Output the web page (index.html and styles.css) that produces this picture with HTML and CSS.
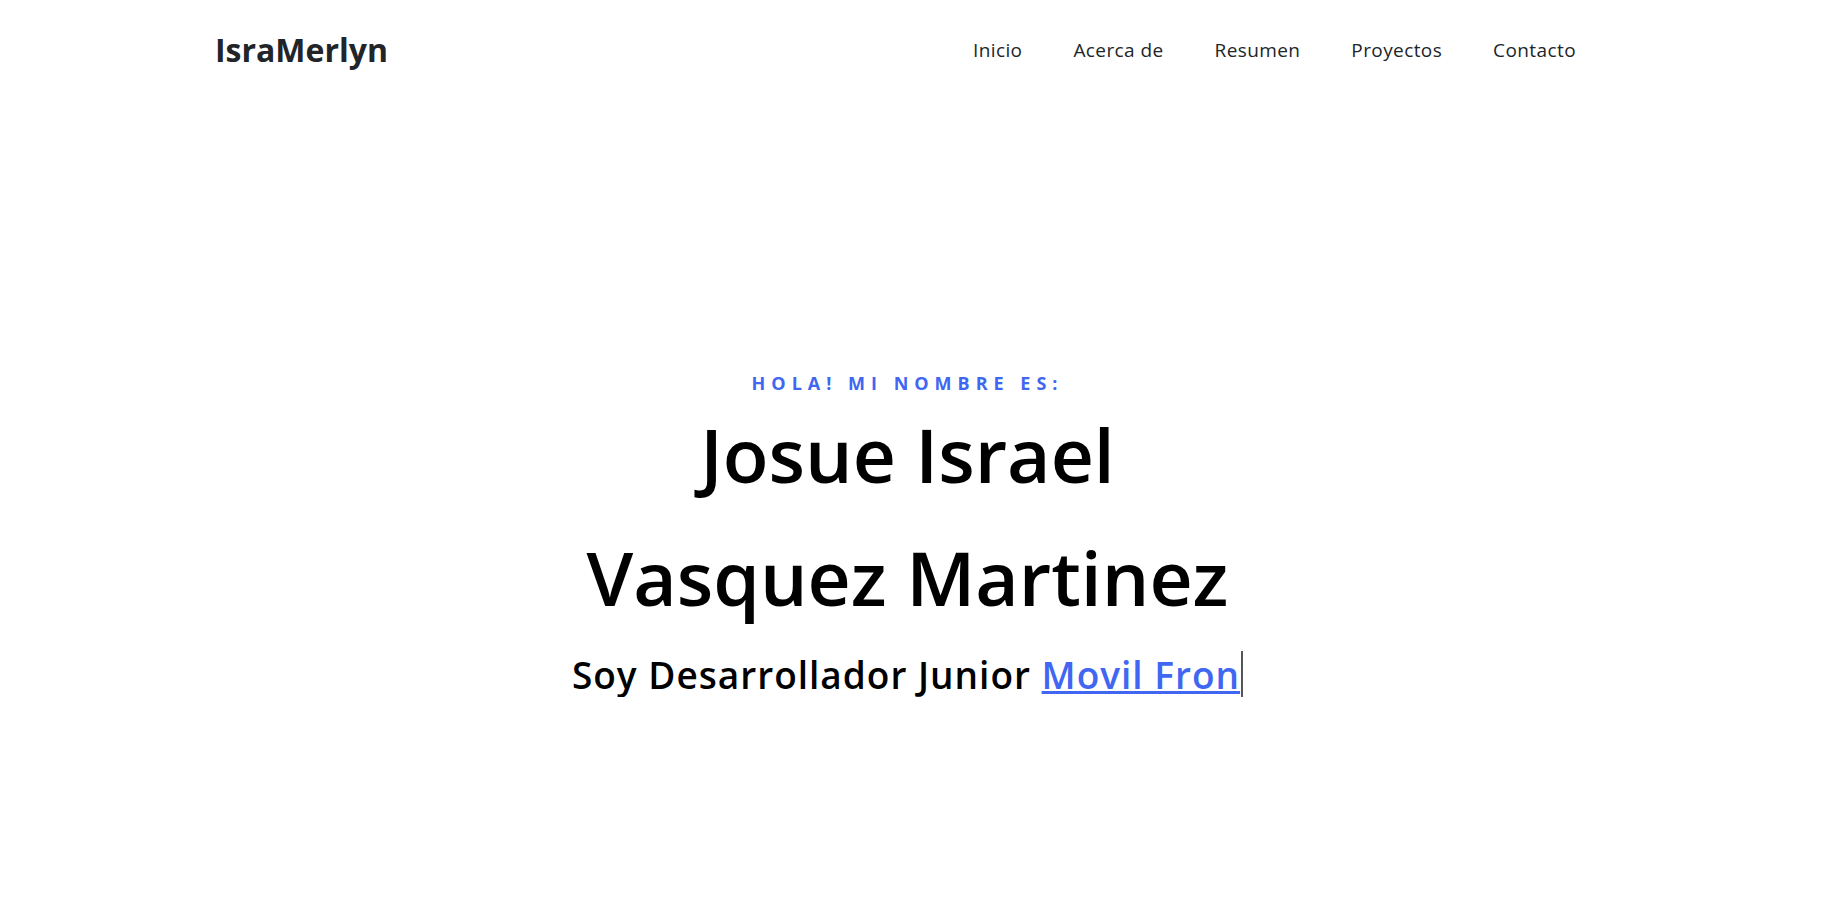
FILE: index.html
```html
<!DOCTYPE html>
<html lang="es">
<head>
<meta charset="utf-8">
<title>IsraMerlyn</title>
<link rel="stylesheet" href="styles.css">
</head>
<body>
<header class="header">
  <div class="header-inner">
    <a class="logo" href="#">IsraMerlyn</a>
    <nav class="nav">
      <a href="#">Inicio</a>
      <a href="#">Acerca de</a>
      <a href="#">Resumen</a>
      <a href="#">Proyectos</a>
      <a href="#">Contacto</a>
    </nav>
  </div>
</header>
<section class="hero">
  <p class="hero-label">Hola! Mi nombre es:</p>
  <h1 class="hero-title"><span class="hero-line">Josue Israel</span><span class="hero-line">Vasquez Martinez</span></h1>
  <p class="hero-sub">Soy Desarrollador Junior <a class="typed" href="#">Movil Fron</a><span class="caret"></span></p>
</section>
</body>
</html>
```
FILE: styles.css
```css
* { box-sizing: border-box; }
html, body { margin: 0; padding: 0; background: #fff; }
body { font-family: "Open Sans", "Liberation Sans", sans-serif; color: #212529; }

.header { height: 100px; }
.header-inner {
  width: 1411px;
  margin: 0 auto;
  height: 100%;
  display: flex;
  align-items: center;
  justify-content: space-between;
}
.logo {
  font-size: 32px;
  font-weight: 700;
  line-height: 1.2;
  color: #212529;
  text-decoration: none;
}
.nav {
  display: flex;
  gap: 51px;
  margin-right: 50px;
}
.nav a {
  font-size: 19px;
  line-height: 1.2;
  letter-spacing: 0.4px;
  color: #212529;
  text-decoration: none;
}

.hero {
  padding: 273px 26px 0 0;
  text-align: center;
}
.hero-label {
  margin: 0;
  font-size: 18px;
  font-weight: 700;
  line-height: 20px;
  letter-spacing: 6px;
  text-transform: uppercase;
  color: #4066f2;
}
.hero-title {
  margin: 0;
  font-size: 75px;
  font-weight: 600;
  line-height: 123px;
  color: #000;
}
.hero-line { display: block; }
.hero-sub {
  margin: 12px 0 0;
  font-size: 37px;
  font-weight: 600;
  line-height: 1.2;
  letter-spacing: 1px;
  color: #000;
}
.typed {
  color: #4066f2;
  text-decoration: underline;
  text-decoration-thickness: 3px;
}
.caret {
  display: inline-block;
  width: 2px;
  height: 46px;
  background: #555;
  vertical-align: -8px;
  margin-left: 1px;
}
```
